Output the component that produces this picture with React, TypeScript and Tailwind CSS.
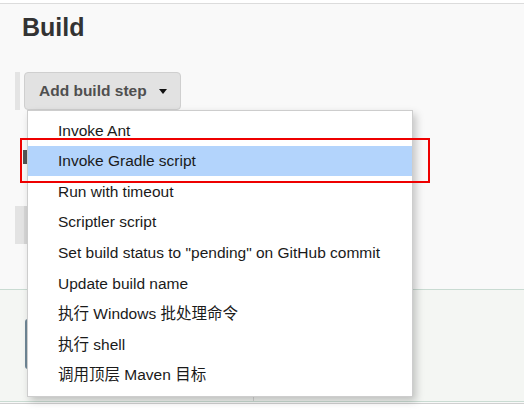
import { useState } from "react";

const steps = [
  "Invoke Ant",
  "Invoke Gradle script",
  "Run with timeout",
  "Scriptler script",
  'Set build status to "pending" on GitHub commit',
  "Update build name",
  "执行 Windows 批处理命令",
  "执行 shell",
  "调用顶层 Maven 目标",
];

export default function App() {
  const [active, setActive] = useState(1);

  return (
    <div
      className="relative w-[524px] h-[411px] overflow-hidden bg-white"
      style={{ fontFamily: '"Liberation Sans", Arial, "Noto Sans CJK SC", sans-serif' }}
    >
      <div className="mt-[3px] h-[401px] border-t border-b border-t-[#dcdcdc] border-b-[#d0d0d0] bg-[#f9f9f9]">
        <h2 className="pl-[22px] pt-[11px] text-[25px] leading-[25px] font-bold text-[#333]">Build</h2>

        <div className="mt-[32px] flex items-stretch gap-[4px] pl-[15px]">
          <div className="w-[5px] bg-[#e4e4e4]" />
          <button className="h-[38px] w-[157px] flex items-center gap-[12px] pl-[14px] rounded-[4px] border border-[#cfcfcf] bg-[#e2e2e2] text-[15.5px] font-bold text-[#4f4f4f]">
            Add build step
            <span className="w-0 h-0 border-l-[4px] border-r-[4px] border-t-[5px] border-l-transparent border-r-transparent border-t-[#111]" />
          </button>
        </div>

        <div className="mt-[40px] ml-[23px] w-[4px] h-[14px] bg-[#555]" />

        <div className="mt-[42px] ml-[15px] flex h-[38px]">
          <div className="w-[9px] bg-[#e3e3e3]" />
          <div className="w-[3px] bg-[#d6d6d6]" />
        </div>

        <div className="mt-[45px] h-[113px] border-t border-b border-[#c9dbd2] bg-[#f4f6f3] flex">
          <div className="w-[254px] border-r border-[#d6d6d6] pt-[29px]">
            <div className="ml-[25px] h-[50px] w-[60px] rounded-l-[3px] border-l-[2px] border-[#6f8796] bg-[#eef0ee]" />
          </div>
        </div>
      </div>

      <div className="absolute left-[27px] top-[110px] w-[386px] border border-[#cdcdcd] bg-white pt-[4px] pb-[6px] shadow-[3px_4px_8px_rgba(0,0,0,0.22)]">
        {steps.map((s, i) => (
          <div
            key={s}
            onMouseEnter={() => setActive(i)}
            className={`h-[30.6px] flex items-center pl-[30px] text-[15.5px] text-[#1a1a1a] ${i === active ? "bg-[#b3d4fc]" : ""}`}
          >
            {s}
          </div>
        ))}
      </div>

      <div className="absolute left-[20px] top-[138px] w-[410px] h-[45px] border-2 border-[#ee0000]" />
    </div>
  );
}
